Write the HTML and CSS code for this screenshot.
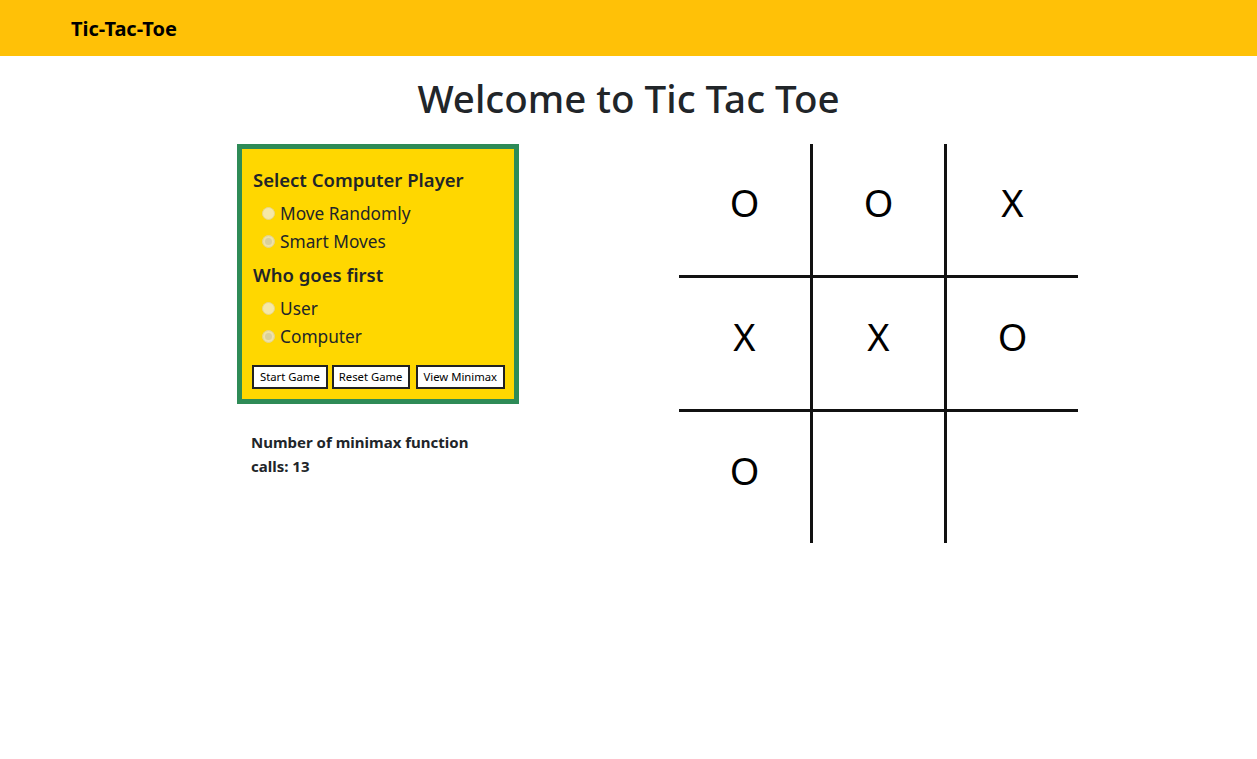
FILE: index.html
```html
<!DOCTYPE html>
<html>
<head>
<meta charset="utf-8">
<title>Tic-Tac-Toe</title>
<link rel="stylesheet" href="styles.css">
</head>
<body>
<nav class="navbar"><span class="brand">Tic-Tac-Toe</span></nav>
<main>
  <h1 class="title">Welcome to Tic Tac Toe</h1>
  <div class="game">
    <div class="side">
      <div class="panel">
        <h5 class="panel-title first">Select Computer Player</h5>
        <div class="opt"><span class="radio"></span><span>Move Randomly</span></div>
        <div class="opt"><span class="radio checked"></span><span>Smart Moves</span></div>
        <h5 class="panel-title second">Who goes first</h5>
        <div class="opt"><span class="radio"></span><span>User</span></div>
        <div class="opt"><span class="radio checked"></span><span>Computer</span></div>
        <div class="buttons">
          <button class="btn">Start Game</button>
          <button class="btn">Reset Game</button>
          <button class="btn wide">View Minimax</button>
        </div>
      </div>
      <p class="info">Number of minimax function calls: 13</p>
    </div>
    <div class="board">
      <div class="cell">O</div>
      <div class="cell">O</div>
      <div class="cell">X</div>
      <div class="cell">X</div>
      <div class="cell">X</div>
      <div class="cell">O</div>
      <div class="cell">O</div>
      <div class="cell"></div>
      <div class="cell"></div>
    </div>
  </div>
</main>
</body>
</html>
```
FILE: styles.css
```css
* { box-sizing: border-box; }
body {
  margin: 0;
  font-family: "Noto Sans", "Open Sans", sans-serif;
  color: #212529;
  background: #fff;
}
.navbar {
  height: 56px;
  background: #ffc107;
  display: flex;
  align-items: center;
  padding-left: 71px;
  padding-top: 2px;
}
.brand {
  font-size: 20px;
  font-weight: 700;
  color: #000;
  line-height: 24px;
}
.title {
  margin: 18px 0 22px;
  text-align: center;
  font-size: 38.5px;
  font-weight: 500;
  line-height: 48px;
}
.game {
  display: flex;
  padding-left: 237px;
  gap: 160px;
  align-items: flex-start;
}
.side { width: 282px; }
.panel {
  width: 282px;
  height: 260px;
  background: #ffd700;
  border: 5px solid #2e8b57;
  padding: 19px 10px 10px 10px;
}
.panel-title {
  margin: 0 0 7px 1px;
  font-size: 18.5px;
  font-weight: 600;
  line-height: 24px;
}
.panel-title.second { margin-top: 8px; }
.opt {
  display: flex;
  align-items: center;
  height: 28px;
  font-size: 17.3px;
  padding-left: 10px;
}
.radio {
  width: 13px;
  height: 13px;
  border-radius: 50%;
  background: #f6e8a6;
  border: 1px solid #e6d68e;
  margin-right: 5px;
  flex: none;
}
.radio.checked {
  background: #d9d09c;
  box-shadow: inset 0 0 0 2px #eee2a8;
}
.buttons {
  display: flex;
  margin-top: 15px;
}
.btn {
  flex: none;
  height: 24px;
  padding: 0 5px;
  white-space: nowrap;
  font-family: inherit;
  font-size: 11.3px;
  line-height: 20px;
  background: #fff;
  border: 2px solid #222;
  color: #000;
  margin-right: 4px;
}
.btn:first-child { padding: 0 6px; }
.btn.wide { margin-left: 2px; margin-right: 0; padding: 0 6px; }
.info {
  margin: 26px 0 0 14px;
  width: 240px;
  font-size: 15px;
  font-weight: 700;
  line-height: 24px;
}
.board {
  display: grid;
  grid-template-columns: repeat(3, 131px);
  grid-template-rows: repeat(3, 131px);
  gap: 3px;
  background: #111;
  width: 399px;
}
.cell {
  background: #fff;
  display: flex;
  align-items: center;
  justify-content: center;
  font-size: 38px;
  color: #000;
  padding-bottom: 15px;
}
```
